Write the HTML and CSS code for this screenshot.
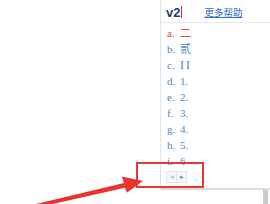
FILE: index.html
```html
<!DOCTYPE html>
<html>
<head>
<meta charset="utf-8">
<link rel="stylesheet" href="styles.css">
</head>
<body>
<div class="stage">
  <div class="row">
    <div class="blank"></div>
    <div class="panel">
      <div class="header">
        <span class="code">v2</span><span class="cursor"></span>
        <a class="help">更多帮助</a>
      </div>
      <ul class="list">
        <li class="item active"><span class="key">a.</span><span class="val">二</span></li>
        <li class="item"><span class="key">b.</span><span class="val">贰</span></li>
        <li class="item"><span class="key">c.</span><span class="val roman">II</span></li>
        <li class="item"><span class="key">d.</span><span class="val">1.</span></li>
        <li class="item"><span class="key">e.</span><span class="val">2.</span></li>
        <li class="item"><span class="key">f.</span><span class="val">3.</span></li>
        <li class="item"><span class="key">g.</span><span class="val">4.</span></li>
        <li class="item"><span class="key">h.</span><span class="val">5.</span></li>
        <li class="item"><span class="key">i.</span><span class="val">6</span></li>
      </ul>
      <div class="pager">
        <span class="pbtn prev">&#9666;</span><span class="pbtn next">&#9656;</span>
      </div>
    </div>
  </div>
  <div class="below"><div class="bar"></div></div>
  <div class="highlight"></div>
  <svg class="arrow" width="270" height="204" viewBox="0 0 270 204">
    <polygon fill="#e8332f" points="29.7,205.5 123.9,183 121.9,176.6 143,181 126.9,192.7 125,187.8 30.3,209"/>
  </svg>
</div>
</body>
</html>
```
FILE: styles.css
```css
html, body {
  margin: 0;
  padding: 0;
  background: #ffffff;
}
.stage {
  position: relative;
  width: 270px;
  height: 204px;
  overflow: hidden;
  font-family: "Liberation Sans", "Noto Sans CJK SC", sans-serif;
}
.row {
  display: flex;
}
.blank {
  width: 160px;
  flex: none;
}
.panel {
  width: 109px;
  height: 188px;
  border-left: 1px solid #dde4eb;
  border-bottom: 2px solid #dcdcdc;
  display: flex;
  flex-direction: column;
  background: #fff;
}
.header {
  height: 23px;
  box-sizing: border-box;
  border-bottom: 1px solid #e5eaf0;
  display: flex;
  align-items: center;
  padding-left: 5px;
  padding-top: 2px;
}
.code {
  font-size: 13px;
  font-weight: bold;
  color: #1f3c78;
}
.cursor {
  display: inline-block;
  width: 1px;
  height: 12px;
  background: #d9333a;
  margin-left: 1px;
}
.help {
  margin-left: 22px;
  font-family: "Noto Sans CJK SC", sans-serif;
  font-size: 9.5px;
  color: #2f6fc6;
  text-decoration: underline;
}
.list {
  list-style: none;
  margin: 0;
  padding: 2px 0 0 6px;
  font-family: "Liberation Serif", "Noto Sans CJK SC", serif;
  font-size: 11px;
  line-height: 16px;
  color: #4a87c4;
}
.item {
  display: flex;
}
.key {
  width: 13px;
  flex: none;
}
.roman {
  letter-spacing: 2px;
  font-size: 12px;
}
.item.active {
  color: #e0453f;
}
.pager {
  display: flex;
  margin: 2px 0 0 5px;
}
.pbtn {
  width: 9px;
  height: 10px;
  border: 1px solid #dfe5ec;
  background: #f5f7fa;
  font-size: 7px;
  line-height: 10px;
  text-align: center;
  color: #b8c2cc;
}
.pbtn.next {
  border-left: none;
  color: #5a8cc4;
}
.below {
  height: 14px;
  display: flex;
}
.bar {
  margin-left: 263px;
  width: 5px;
  background: #cbcbcb;
}
.highlight {
  position: absolute;
  left: 136px;
  top: 162px;
  width: 68px;
  height: 26px;
  border: 2px solid #e23a36;
  box-sizing: border-box;
}
.arrow {
  position: absolute;
  left: 0;
  top: 0;
}
```
